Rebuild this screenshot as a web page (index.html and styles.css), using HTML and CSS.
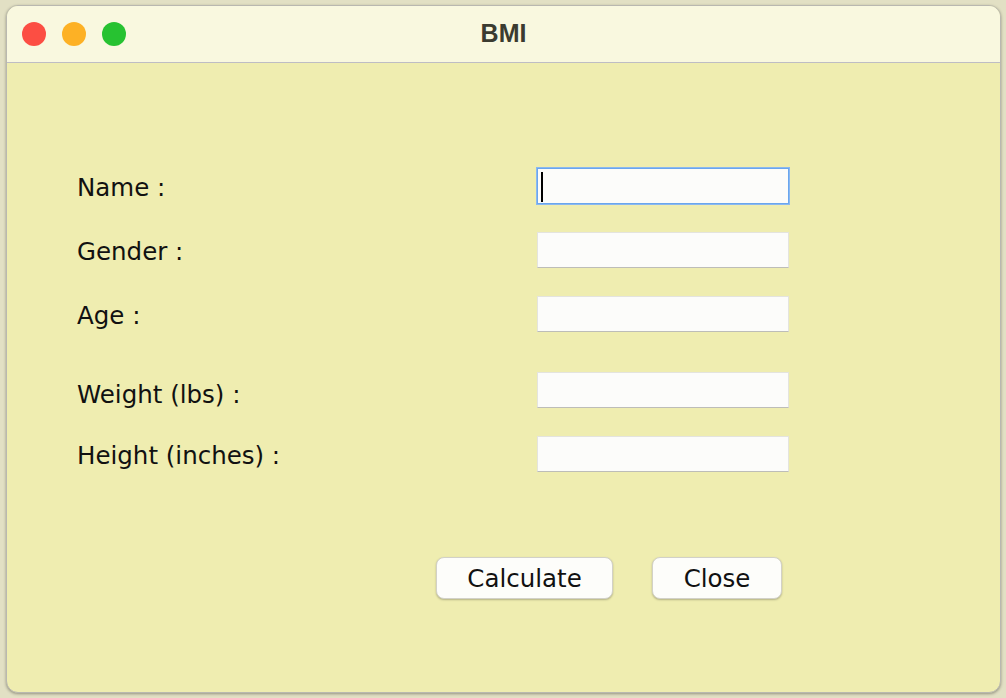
FILE: index.html
```html
<!DOCTYPE html>
<html>
<head>
<meta charset="utf-8">
<link rel="stylesheet" href="styles.css">
<title>BMI</title>
</head>
<body>
<div class="window">
  <div class="titlebar">
    <div class="lights">
      <span class="light red"></span>
      <span class="light yellow"></span>
      <span class="light green"></span>
    </div>
    <div class="title">BMI</div>
  </div>
  <div class="content">
    <div class="row r-name">
      <label class="label">Name :</label>
      <div class="field focused"><span class="caret"></span></div>
    </div>
    <div class="row r-gap">
      <label class="label">Gender :</label>
      <div class="field"></div>
    </div>
    <div class="row r-gap">
      <label class="label">Age :</label>
      <div class="field"></div>
    </div>
    <div class="row r-gap-lg">
      <label class="label label-low">Weight (lbs) :</label>
      <div class="field"></div>
    </div>
    <div class="row r-gap">
      <label class="label">Height (inches) :</label>
      <div class="field"></div>
    </div>
    <div class="buttons">
      <button class="btn btn-calc">Calculate</button>
      <button class="btn btn-close">Close</button>
    </div>
  </div>
</div>
</body>
</html>
```
FILE: styles.css
```css
html, body {
  margin: 0;
  padding: 0;
}
body {
  width: 1006px;
  height: 698px;
  background: #e2e0c4;
  overflow: hidden;
  font-family: "DejaVu Sans", sans-serif;
}
.window {
  box-sizing: border-box;
  margin: 5px 0 0 6px;
  width: 995px;
  height: 688px;
  border: 1px solid #b9b8b0;
  border-radius: 12px;
  background: #efedb0;
  overflow: hidden;
  box-shadow: 0 1px 3px rgba(0,0,0,0.35);
  display: flex;
  flex-direction: column;
}
.titlebar {
  position: relative;
  height: 56px;
  flex: none;
  background: #f9f8df;
  border-bottom: 1px solid #bebdc4;
  display: flex;
  align-items: center;
}
.lights {
  display: flex;
  gap: 16px;
  padding-left: 15px;
}
.light {
  width: 24px;
  height: 24px;
  border-radius: 50%;
  display: block;
}
.red { background: #fc4e43; }
.yellow { background: #fdb125; }
.green { background: #27c231; }
.title {
  position: absolute;
  left: 0;
  right: 0;
  top: 0;
  bottom: 0;
  display: flex;
  align-items: center;
  justify-content: center;
  font-family: "Liberation Sans", sans-serif;
  font-weight: bold;
  font-size: 25px;
  color: #3b3b30;
  padding-bottom: 1px;
}
.content {
  flex: 1;
  padding: 105px 0 0 70px;
}
.row {
  display: flex;
  align-items: center;
  height: 36px;
}
.r-gap { margin-top: 28px; }
.r-gap-lg { margin-top: 40px; }
.label {
  width: 460px;
  font-size: 24.5px;
  color: #111;
  line-height: 36px;
  padding-top: 3px;
}
.label-low {
  padding-top: 10px;
}
.field {
  box-sizing: border-box;
  width: 252px;
  height: 36px;
  background: #fcfcfa;
  border: 1px solid #e4e4de;
  border-bottom: 1px solid #bdbdb8;
  position: relative;
}
.field.focused {
  border: 1px solid #6aa6ee;
  box-shadow: 0 0 0 1px #8ab8f0;
}
.caret {
  position: absolute;
  left: 3px;
  top: 3px;
  width: 2px;
  height: 30px;
  background: #000;
}
.buttons {
  display: flex;
  gap: 39px;
  margin-top: 85px;
  padding-left: 359px;
}
.btn {
  box-sizing: border-box;
  height: 42px;
  border-radius: 8px;
  border: 1px solid #d2d1c8;
  background: #fdfdfa;
  box-shadow: 0 1px 2px rgba(0,0,0,0.25);
  font-family: "DejaVu Sans", sans-serif;
  font-size: 24.5px;
  color: #111;
  padding: 0;
}
.btn-calc { width: 177px; }
.btn-close { width: 130px; }
```
